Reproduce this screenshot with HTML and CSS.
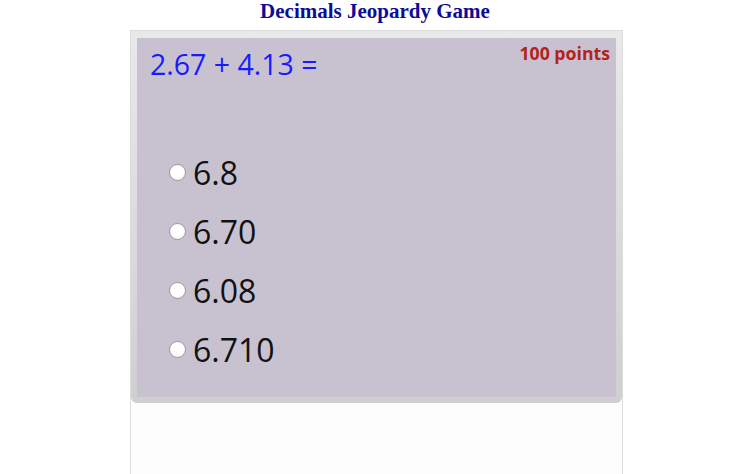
FILE: index.html
```html
<!DOCTYPE html>
<html>
<head>
<meta charset="utf-8">
<link rel="stylesheet" href="styles.css">
</head>
<body>
<h1 class="title">Decimals Jeopardy Game</h1>
<div class="board">
  <div class="card">
    <div class="panel">
      <div class="head">
        <div class="question">2.67 + 4.13 =</div>
        <div class="points">100 points</div>
      </div>
      <ul class="options">
        <li class="option"><span class="radio"></span><span class="label">6.8</span></li>
        <li class="option"><span class="radio"></span><span class="label">6.70</span></li>
        <li class="option"><span class="radio"></span><span class="label">6.08</span></li>
        <li class="option"><span class="radio"></span><span class="label">6.710</span></li>
      </ul>
    </div>
  </div>
</div>
</body>
</html>
```
FILE: styles.css
```css
html, body {
  margin: 0;
  padding: 0;
  background: #ffffff;
  height: 100%;
  overflow: hidden;
}
.title {
  margin: 0;
  padding-top: 1px;
  height: 29px;
  font-family: "Liberation Serif", "Times New Roman", serif;
  font-weight: bold;
  font-size: 21px;
  line-height: 21px;
  color: #0c0c98;
  text-align: center;
}
.board {
  width: 491px;
  margin-left: 130px;
  height: 460px;
  border: 1px solid #dcdcdc;
  border-bottom: none;
  background: #fdfdfd;
}
.card {
  background: linear-gradient(#e9e9e9, #cfcfcf);
  padding: 7px 6px 6px 6px;
  border-radius: 0 0 6px 6px;
}
.panel {
  background: #c8c2d0;
  height: 359px;
  padding: 0 6px 0 13px;
  box-sizing: border-box;
  font-family: "Open Sans", "Noto Sans", sans-serif;
}
.head {
  display: flex;
  justify-content: space-between;
  align-items: flex-start;
}
.question {
  color: #1a1aff;
  font-size: 28.5px;
  line-height: 40px;
  padding-top: 6px;
}
.points {
  color: #b3231b;
  font-weight: bold;
  font-size: 17.7px;
  line-height: 24px;
  padding-top: 3px;
}
.options {
  list-style: none;
  margin: 0;
  padding: 59px 0 0 19px;
}
.option {
  display: flex;
  align-items: center;
  height: 59px;
}
.radio {
  width: 15px;
  height: 15px;
  border: 1px solid #9a9a9a;
  border-radius: 50%;
  background: radial-gradient(circle at 50% 40%, #ffffff 50%, #ececec 100%);
  margin-right: 7px;
  flex: none;
}
.label {
  font-size: 32px;
  color: #111111;
  line-height: 44px;
}
```
